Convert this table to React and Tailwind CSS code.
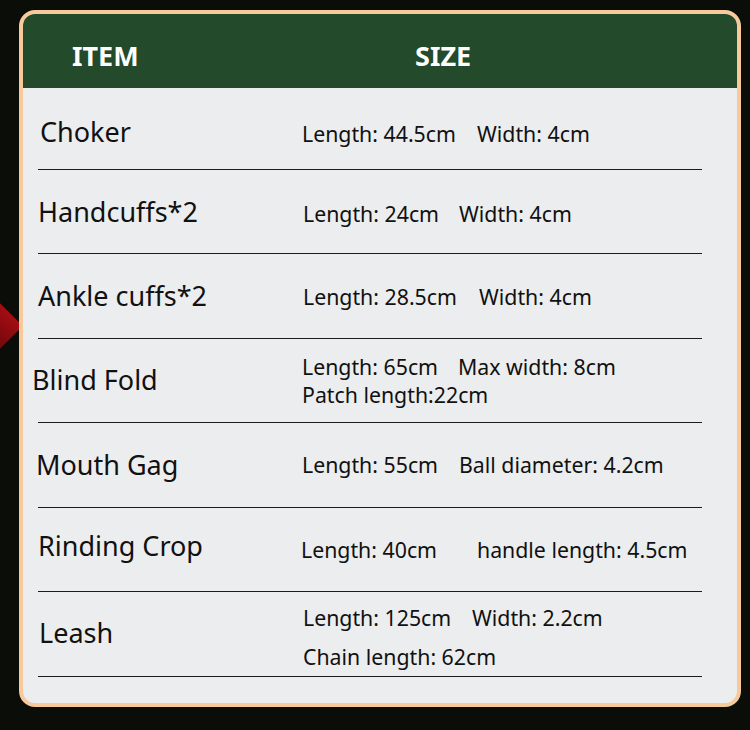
import React from 'react';

const rows = [
  { name: 'Choker', h: 'h-[82px]', nameCls: 'ml-[2px] mt-[8px]', specCls: 'mt-[10px]', lines: [['Length: 44.5cm', 'Width: 4cm', 'w-[175px]']] },
  { name: 'Handcuffs*2', h: 'h-[84px]', nameCls: 'mt-[2px]', specCls: 'ml-[1px] mt-[4px]', lines: [['Length: 24cm', 'Width: 4cm', 'w-[156px]']] },
  { name: 'Ankle cuffs*2', h: 'h-[85px]', nameCls: '', specCls: 'ml-[1px] mt-[2px]', lines: [['Length: 28.5cm', 'Width: 4cm', 'w-[176px]']] },
  { name: 'Blind Fold', h: 'h-[84px]', nameCls: 'ml-[-6px]', specCls: 'mt-[0px]', lines: [['Length: 65cm', 'Max width: 8cm', 'w-[156px]'], ['Patch length:22cm']] },
  { name: 'Mouth Gag', h: 'h-[85px]', nameCls: 'ml-[-2px]', specCls: '', lines: [['Length: 55cm', 'Ball diameter: 4.2cm', 'w-[157px]']] },
  { name: 'Rinding Crop', h: 'h-[84px]', nameCls: 'mt-[-6px]', specCls: 'ml-[-1px]', lines: [['Length: 40cm', 'handle length: 4.5cm', 'w-[176px]']] },
  { name: 'Leash', h: 'h-[85px]', nameCls: 'ml-[1px] mt-[-2px]', specCls: 'ml-[1px] mt-[6px]', lh: 'leading-[39px]', lines: [['Length: 125cm', 'Width: 2.2cm', 'w-[169px]'], ['Chain length: 62cm']] },
];

const SizeChart = () => {
  return (
    <div className="relative h-[730px] w-[750px] overflow-hidden bg-[#0a0d08] pt-[10px] font-['Noto_Sans',sans-serif]">
      {/* red bit peeking out on the left */}
      <div className="absolute left-[-23px] top-[307px] h-[38px] w-[38px] rotate-45 bg-gradient-to-b from-[#a50d12] to-[#6a070b]" />

      <div className="relative ml-[19px] flex h-[697px] w-[722px] flex-col overflow-hidden rounded-[16px] border-[4px] border-[#f7c99b] bg-[#ecedee]">
        <div className="flex h-[74px] shrink-0 items-center bg-[#224a2b] pt-[11px] text-[27px] font-bold text-white">
          <span className="ml-[49px] w-[343px]">ITEM</span>
          <span>SIZE</span>
        </div>

        <div className="ml-[15px] mr-[35px] flex flex-col">
          {rows.map((r) => (
            <div key={r.name} className={`flex items-center border-b border-[#1c1c1c] ${r.h}`}>
              <div className="w-[264px] shrink-0">
                <div className={`text-[27px] text-[#111] ${r.nameCls}`}>{r.name}</div>
              </div>
              <div className={`flex flex-col text-[21.3px] text-[#111] ${r.lh || 'leading-[28px]'} ${r.specCls}`}>
                {r.lines.map((l, i) => (
                  <div key={i} className="flex whitespace-nowrap">
                    <span className={l[2] || ''}>{l[0]}</span>
                    {l[1] && <span>{l[1]}</span>}
                  </div>
                ))}
              </div>
            </div>
          ))}
        </div>
      </div>
    </div>
  );
};

export default SizeChart;
